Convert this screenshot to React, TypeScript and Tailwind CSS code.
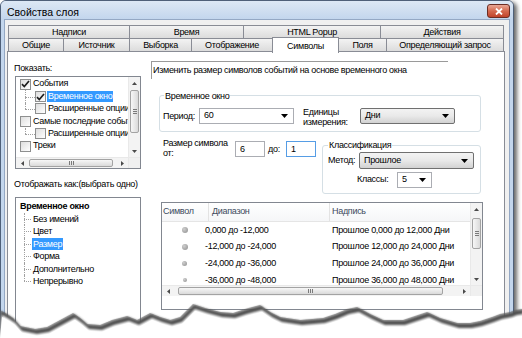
import React from "react";

type Dir = "up" | "down" | "left" | "right";

// small filled triangle used by scrollbars and combo boxes
function Arrow({ dir, big = false }: { dir: Dir; big?: boolean }) {
  const s = big ? 7 : 5;
  const t = big ? 4 : 3;
  const vert = dir === "up" || dir === "down";
  const paths: Record<Dir, string> = {
    up: `M0 ${t}H${s}L${s / 2} 0Z`,
    down: `M0 0H${s}L${s / 2} ${t}Z`,
    left: `M${t} 0V${s}L0 ${s / 2}Z`,
    right: `M0 0V${s}L${t} ${s / 2}Z`,
  };
  return (
    <svg width={vert ? s : t} height={vert ? t : s} viewBox={`0 0 ${vert ? s : t} ${vert ? t : s}`}>
      <path d={paths[dir]} fill={big ? "#000" : "#4a4a4a"} />
    </svg>
  );
}

function VScroll({ pad, thumb }: { pad: string; thumb: string }) {
  return (
    <div className="w-[12px] h-full flex flex-col bg-[#f3f3f3] border-l border-[#e9e9e9] shrink-0">
      <div className="h-[12px] flex items-center justify-center">
        <Arrow dir="up" />
      </div>
      <div className={`flex-1 ${pad}`}>
        <div
          className={`${thumb} mx-[1px] rounded-[2px] border border-[#a3a3a3] bg-gradient-to-r from-[#f7f7f7] to-[#dadada] flex flex-col items-center justify-center gap-[1px]`}
        >
          <div className="w-[4px] h-px bg-[#7a7a7a]" />
          <div className="w-[4px] h-px bg-[#7a7a7a]" />
          <div className="w-[4px] h-px bg-[#7a7a7a]" />
        </div>
      </div>
      <div className="h-[12px] flex items-center justify-center">
        <Arrow dir="down" />
      </div>
    </div>
  );
}

function HScroll({ pad, thumb }: { pad: string; thumb: string }) {
  return (
    <div className="h-[11px] flex-1 flex bg-[#f3f3f3] border-t border-[#e9e9e9]">
      <div className="w-[12px] flex items-center justify-center">
        <Arrow dir="left" />
      </div>
      <div className={`flex-1 flex ${pad}`}>
        <div
          className={`${thumb} my-[1px] rounded-[2px] border border-[#a3a3a3] bg-gradient-to-b from-[#f7f7f7] to-[#dadada] flex items-center justify-center gap-[1px]`}
        >
          <div className="w-px h-[4px] bg-[#7a7a7a]" />
          <div className="w-px h-[4px] bg-[#7a7a7a]" />
          <div className="w-px h-[4px] bg-[#7a7a7a]" />
        </div>
      </div>
      <div className="w-[12px] flex items-center justify-center">
        <Arrow dir="right" />
      </div>
    </div>
  );
}

function Check({ on }: { on?: boolean }) {
  return (
    <div className="w-[11px] h-[11px] shrink-0 border border-[#8e8f8f] bg-gradient-to-br from-[#dedede] to-white flex items-center justify-center">
      {on && (
        <svg width="9" height="8" viewBox="0 0 9 8">
          <path d="M1 4.2l2.3 2.3L8 1" stroke="#1d1d1d" strokeWidth="1.7" fill="none" />
        </svg>
      )}
    </div>
  );
}

// dotted tree connector, "mid" = ├ , "last" = └
function Branch({ kind, w, line }: { kind: "mid" | "last"; w: string; line: string }) {
  return (
    <div className={`${w} h-full relative shrink-0`}>
      <div
        className={`absolute left-[5px] top-0 border-l border-dotted border-[#a0a0a0] ${
          kind === "mid" ? "h-full" : "h-1/2"
        }`}
      />
      <div className={`absolute left-[5px] top-1/2 border-t border-dotted border-[#a0a0a0] ${line}`} />
    </div>
  );
}

function Tab({ label, w, active = false }: { label: string; w: string; active?: boolean }) {
  if (active)
    return (
      <div
        className={`${w} h-[16px] -ml-px relative top-[1px] z-10 border border-b-0 border-[#898c95] bg-white flex items-start pt-[2px] justify-center`}
      >
        {label}
      </div>
    );
  return (
    <div
      className={`${w} h-[14px] -ml-px first:ml-0 pt-px border border-[#898c95] bg-gradient-to-b from-[#f3f3f3] to-[#dcdcdc] flex items-center justify-center leading-none`}
    >
      {label}
    </div>
  );
}

function Combo({ value, w, gray = false, h = "h-[16px]" }: { value: string; w: string; gray?: boolean; h?: string }) {
  return (
    <div
      className={`${w} ${h} flex items-center justify-between pl-[4px] pr-[5px] ${
        gray
          ? "border border-[#707070] rounded-[2px] bg-gradient-to-b from-[#f3f3f3] via-[#e9e9e9] to-[#d2d2d2]"
          : "border border-[#abadb3] bg-white"
      }`}
    >
      <span>{value}</span>
      <Arrow dir="down" big />
    </div>
  );
}

const rows = [
  { r: "0,000 до -12,000", l: "Прошлое 0,000 до 12,000 Дни", d: "w-[6px] h-[6px]" },
  { r: "-12,000 до -24,000", l: "Прошлое 12,000 до 24,000 Дни", d: "w-[6px] h-[6px]" },
  { r: "-24,000 до -36,000", l: "Прошлое 24,000 до 36,000 Дни", d: "w-[5px] h-[5px]" },
  { r: "-36,000 до -48,000", l: "Прошлое 36,000 до 48,000 Дни", d: "w-[4px] h-[4px]" },
];

const tornEdge =
  "0,310 7,314 13,318 20,326 35,329 47,327 60,320 73,313 80,318 87,324 100,325 112,320 127,316 137,320 150,313 160,317 170,320 180,317 193,304 205,308 220,312 233,313 245,309 260,305 270,312 280,317 300,320 323,318 335,314 347,309 357,307 370,314 383,320 403,320 415,316 427,312 440,318 457,323 470,323 480,321 492,317 500,314 510,312 515,310 522,309";

function shift(points: string, dx: number, dy: number) {
  return points
    .split(" ")
    .map((p) => {
      const [x, y] = p.split(",").map(Number);
      return `${x + dx},${y + dy}`;
    })
    .join(" ");
}

export default function App() {
  return (
    <div className="relative w-[522px] h-[338px] overflow-hidden bg-white font-['Liberation_Sans',Arial,sans-serif] text-[9px] tracking-[-0.3px] text-black">
      {/* window */}
      <div className="w-[514px] h-[338px] flex flex-col border border-[#4f6079] rounded-t-[6px] bg-[#c3d6ed] shadow-[3px_2px_4px_rgba(0,0,0,0.6)]">
        {/* title bar */}
        <div className="h-[20px] flex items-start justify-between pl-[6px] pr-[3px] bg-gradient-to-b from-[#dde8f5] to-[#c3d6ed] rounded-t-[5px]">
          <span className="pt-[4px] leading-[14px] text-[10.5px] tracking-normal">Свойства слоя</span>
          <div className="w-[23px] h-[14px] mt-[3px] rounded-[3px] border border-[#6b2d24] bg-gradient-to-b from-[#e9a796] via-[#d4694f] to-[#c0432b] flex items-center justify-center">
            <svg width="8" height="7" viewBox="0 0 8 7">
              <path d="M1 0.5l6 6M7 0.5l-6 6" stroke="#fff" strokeWidth="1.8" />
            </svg>
          </div>
        </div>

        {/* client area */}
        <div className="flex-1 mx-[3px] flex flex-col pt-[5px] border border-[#94a8c4] bg-[#f0f0f0]">
          <div className="ml-[3px] flex">
            <Tab label="Надписи" w="w-[122px]" />
            <Tab label="Время" w="w-[115px]" />
            <Tab label="HTML Popup" w="w-[138px]" />
            <Tab label="Действия" w="w-[124px]" />
          </div>
          <div className="ml-[3px] -mt-px h-[14px] flex items-end">
            <Tab label="Общие" w="w-[56px]" />
            <Tab label="Источник" w="w-[67px]" />
            <Tab label="Выборка" w="w-[63px]" />
            <Tab label="Отображение" w="w-[82px]" />
            <Tab label="Символы" w="w-[67px]" active />
            <Tab label="Поля" w="w-[49px]" />
            <Tab label="Определяющий запрос" w="w-[118px]" />
          </div>

          {/* tab page */}
          <div className="flex-1 -mt-px ml-[2px] w-[498px] flex border border-[#898c95] bg-white">
            {/* left column */}
            <div className="ml-[7px] mt-[9px] w-[126px] flex flex-col">
              <div className="h-[13px] pt-px leading-[13px] -ml-[1px]">Показать:</div>
              <div className="mt-[2px] h-[93px] flex flex-col border border-[#828790] bg-white">
                <div className="flex-1 flex min-h-0">
                  <div className="flex-1 pt-[1px] overflow-hidden whitespace-nowrap">
                    <div className="h-[12.4px] flex items-center pl-[4px]">
                      <Check on />
                      <span className="ml-[2px]">События</span>
                    </div>
                    <div className="h-[12.4px] flex items-center pl-[4px]">
                      <Branch kind="mid" w="w-[15px]" line="w-[10px]" />
                      <Check on />
                      <span className="ml-[1px] px-[1px] bg-[#3399ff] text-white leading-[11px]">Временное окно</span>
                    </div>
                    <div className="h-[12.4px] flex items-center pl-[4px]">
                      <Branch kind="last" w="w-[15px]" line="w-[10px]" />
                      <Check />
                      <span className="ml-[1px] px-[1px]">Расширенные опции</span>
                    </div>
                    <div className="h-[12.4px] flex items-center pl-[4px]">
                      <Check />
                      <span className="ml-[2px]">Самые последние события</span>
                    </div>
                    <div className="h-[12.4px] flex items-center pl-[4px]">
                      <Branch kind="last" w="w-[15px]" line="w-[10px]" />
                      <Check />
                      <span className="ml-[1px] px-[1px]">Расширенные опции</span>
                    </div>
                    <div className="h-[12.4px] flex items-center pl-[4px]">
                      <Check />
                      <span className="ml-[2px]">Треки</span>
                    </div>
                  </div>
                  <VScroll pad="pt-[1px]" thumb="h-[43px]" />
                </div>
                <div className="flex">
                  <HScroll pad="pl-[1px] pr-[1px]" thumb="w-[84px]" />
                  <div className="w-[12px] bg-[#f0f0f0] border-t border-l border-[#e9e9e9]" />
                </div>
              </div>

              <div className="mt-[8px] h-[13px] pt-px leading-[13px] -ml-[1px] whitespace-nowrap">
                Отображать как:(выбрать одно)
              </div>
              <div className="mt-[7px] h-[140px] pt-[2px] border border-[#828790] bg-white whitespace-nowrap">
                <div className="h-[12.5px] flex items-center pl-[4px] font-bold">Временное окно</div>
                {["Без имений", "Цвет", "Размер", "Форма", "Дополнительно", "Непрерывно"].map((t, i) => (
                  <div key={t} className="h-[12.5px] flex items-center pl-[3px]">
                    <Branch kind={i === 5 ? "last" : "mid"} w="w-[13px]" line="w-[7px]" />
                    <span className={`px-[1px] leading-[12px] ${t === "Размер" ? "bg-[#3399ff] text-white" : ""}`}>{t}</span>
                  </div>
                ))}
              </div>
            </div>

            {/* right column */}
            <div className="ml-[9px] mt-[9px] w-[334px] flex flex-col">
              <div className="ml-[1px] w-[297px] h-[18px] pl-[1px] leading-[16px] border-t border-l border-[#9a9a9a] whitespace-nowrap">
                Изменить размер символов событий на основе временного окна
              </div>

              {/* time window group */}
              <div className="relative mt-[16px] ml-[9px] w-[322px] h-[37px] border border-[#d5dfe5] rounded-[3px] flex items-start pt-[12px] pl-[3px]">
                <span className="absolute left-[4px] -top-[6px] px-[1px] bg-white leading-[12px]">Временное окно</span>
                <span className="w-[36px] leading-[16px]">Период:</span>
                <Combo value="60" w="w-[95px]" />
                <div className="ml-[9px] w-[57px] leading-[10px] -mt-[1px]">
                  Единицы
                  <br />
                  измерения:
                </div>
                <Combo value="Дни" w="w-[95px]" gray />
              </div>

              <div className="mt-[9px] flex items-start">
                <div className="ml-[13px] w-[72px] -mt-[3px] leading-[10px]">
                  Размер символа
                  <br />
                  от:
                </div>
                <div className="w-[30px] h-[16px] pl-[4px] leading-[14px] border border-[#abadb3]">6</div>
                <span className="ml-[3px] w-[18px] leading-[16px]">до:</span>
                <div className="w-[30px] h-[16px] pl-[4px] leading-[14px] border border-[#569de5]">1</div>

                {/* classification group */}
                <div className="relative ml-[6px] mt-[4px] w-[159px] h-[49px] border border-[#d5dfe5] rounded-[3px] pt-[6px] pl-[5px]">
                  <span className="absolute left-[5px] -top-[7px] px-[1px] bg-white leading-[12px]">Классификация</span>
                  <div className="flex items-center">
                    <span className="w-[31px]">Метод:</span>
                    <Combo value="Прошлое" w="w-[115px]" h="h-[17px]" gray />
                  </div>
                  <div className="mt-[3px] pl-[29px] flex items-center">
                    <span className="w-[40px]">Классы:</span>
                    <Combo value="5" w="w-[35px]" />
                  </div>
                </div>
              </div>

              {/* classes table */}
              <div className="mt-[8px] ml-[11px] w-[322px] h-[108px] flex flex-col border border-[#828790] bg-white">
                <div className="flex h-[82px]">
                  <div className="flex-1 flex flex-col min-w-0">
                    <div className="h-[19px] flex bg-gradient-to-b from-white to-[#f5f6f8] border-b border-[#e5e5e5] text-[#3d4a5c]">
                      <div className="w-[47px] pl-[1px] flex items-center border-r border-[#e3e3e3]">Символ</div>
                      <div className="w-[121px] pl-[3px] flex items-center border-r border-[#e3e3e3]">Диапазон</div>
                      <div className="flex-1 pl-[2px] flex items-center">Надпись</div>
                    </div>
                    <div className="flex-1 overflow-hidden whitespace-nowrap">
                      {rows.map((row) => (
                        <div key={row.r} className="h-[16.7px] flex items-center">
                          <div className="w-[43px] flex justify-center pl-[2px]">
                            <div className={`${row.d} rounded-full bg-[radial-gradient(circle_at_35%_35%,#cfcfcf,#8d8d8d)]`} />
                          </div>
                          <div className="w-[127px]">{row.r}</div>
                          <div>{row.l}</div>
                        </div>
                      ))}
                    </div>
                  </div>
                  <VScroll pad="pt-[3px]" thumb="h-[31px]" />
                </div>
                <div className="flex">
                  <HScroll pad="pl-[4px] pr-[13px]" thumb="w-[265px]" />
                  <div className="w-[12px] bg-[#f0f0f0] border-t border-l border-[#e9e9e9]" />
                </div>
              </div>
            </div>
          </div>
        </div>
      </div>

      {/* torn paper edge */}
      <svg className="absolute inset-0 pointer-events-none" width="522" height="338" viewBox="0 0 522 338">
        <defs>
          <filter id="soft" x="-5%" y="-20%" width="110%" height="140%">
            <feGaussianBlur stdDeviation="1.3" />
          </filter>
        </defs>
        <polygon points={`${shift(tornEdge, 1, 1)} 522,338 0,338`} fill="#2e2e2e" filter="url(#soft)" />
        <polygon points={`${shift(tornEdge, 0, 0)} 522,338 0,338`} fill="#6a6a6a" opacity="0.55" />
        <polygon points={`${shift(tornEdge, 2, 5)} 522,338 0,338`} fill="#ffffff" filter="url(#soft)" />
        <polygon points={`${shift(tornEdge, 2, 7)} 522,338 0,338`} fill="#ffffff" />
      </svg>
    </div>
  );
}
